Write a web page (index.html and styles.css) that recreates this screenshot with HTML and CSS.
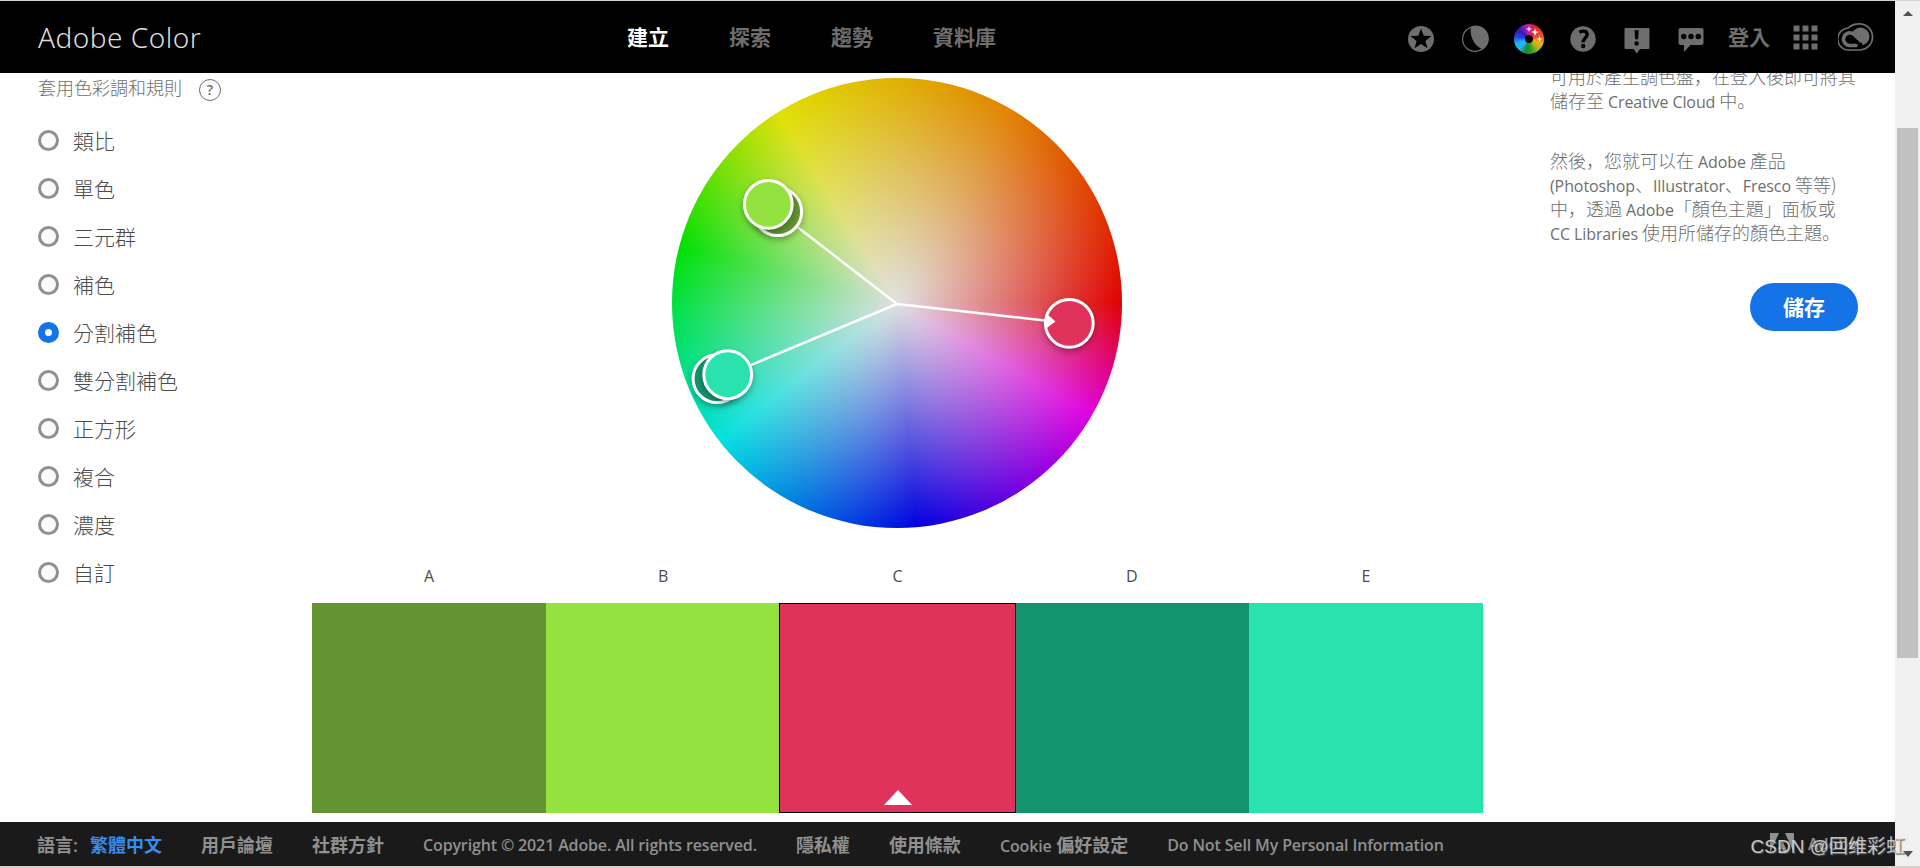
FILE: index.html
```html
<!DOCTYPE html>
<html lang="zh-Hant">
  <head>
    <meta charset="utf-8">
    <title>Adobe Color</title>
    <link rel="stylesheet" href="styles.css">
  </head>

<body>
  <div class="page">
  <header class="header">
    <div class="brand"><span class="lat">Adobe Color</span></div>
    <nav class="nav">
      <a class="active">建立</a>
      <a>探索</a>
      <a>趨勢</a>
      <a>資料庫</a>
    </nav>
    <div class="tools">
      <svg class="icon" viewBox="0 0 30 32">
        <circle cx="15" cy="16" r="13"/>
        <path fill="#000" d="M15 5.5l2.700 7.200 7.800.4-6.100 4.800 2.100 7.400-6.500-4.300-6.500 4.300 2.100-7.400-6.100-4.800 7.800-.4z"/>
      </svg>
      <svg class="icon" viewBox="0 0 30 32">
        <circle cx="15" cy="16" r="12.4" fill="none" stroke="#6e6e6e" stroke-width="1.2"/>
        <path d="M10.700 3.700A13 13 0 0 1 23.300 26.300C14.500 23.500 9.500 14 10.700 3.700z"/>
      </svg>
      <div class="mini-wheel">
        <svg viewBox="0 0 30 30">
          <circle cx="15" cy="15" r="4" fill="#000"/>
          <path fill="#fff" d="M15 2l.7 2.300 2.300.7-2.300.7-.7 2.300-.7-2.300-2.300-.7 2.300-.7zM21 4l1 3 3 1-3 1-1 3-1-3-3-1 3-1zM25.500 12l.7 2.300 2.300.7-2.300.7-.7 2.300-.7-2.300-2.300-.7 2.300-.7z"/>
        </svg>
      </div>
      <svg class="icon" viewBox="0 0 30 32">
        <circle cx="15" cy="16" r="12.700"/>
        <path fill="none" stroke="#000" stroke-width="3.400" d="M11.400 9.300c4.500-2.500 8-.8 7.700 2.500-.2 3-4.100 3.500-3.900 7.600"/>
        <circle cx="15.200" cy="23" r="2.200" fill="#000"/>
      </svg>
      <svg class="icon" viewBox="0 0 30 32">
        <path d="M3.500 5h23a1 1 0 0 1 1 1v19a1 1 0 0 1-1 1H18l-3.200 4.500L11.600 26H3.500a1 1 0 0 1-1-1V6a1 1 0 0 1 1-1z"/>
        <path fill="#000" d="M12.500 7.300h4.200l-.6 9h-3z"/>
        <circle cx="14.600" cy="20.500" r="2.200" fill="#000"/>
      </svg>
      <svg class="icon" viewBox="0 0 30 32">
        <path d="M4.500 5h21a2 2 0 0 1 2 2v13a2 2 0 0 1-2 2H14.500l-6.500 7v-7H4.500a2 2 0 0 1-2-2V7a2 2 0 0 1 2-2z"/>
        <g fill="#000"><circle cx="7.700" cy="13.500" r="2.700"/><circle cx="15" cy="13.500" r="2.700"/><circle cx="22.300" cy="13.500" r="2.700"/></g>
      </svg>
      <a class="login">登入</a>
      <svg class="apps" viewBox="0 0 25 25">
        <path d="M.5.500h6v6h-6zM9.500.500h6v6h-6zM18.500.500h6v6h-6zM.5 9.500h6v6h-6zM9.500 9.500h6v6h-6zM18.500 9.500h6v6h-6zM.5 18.500h6v6h-6zM9.500 18.500h6v6h-6zM18.500 18.500h6v6h-6z"/>
      </svg>
      <svg class="cc" viewBox="0 0 36 28">
        <path fill="none" stroke="#6e6e6e" stroke-width="1.700" d="M10 5C12.500 2.500 17.500.9 21.500.9A13 13 0 0 1 21.500 27H11.500A11 11 0 0 1 10 5z"/>
        <circle cx="22.500" cy="13.500" r="9"/>
        <path fill="none" stroke="#000" stroke-width="6.500" d="M10 17q2-5 5.500-1.500l4 3.500q2 1.500 4.500 1"/>
        <path fill="none" stroke="#6e6e6e" stroke-width="3.600" stroke-linecap="round" d="M18 22.500H11.500A6.300 6.300 0 1 1 16 11.500L23 18"/>
      </svg>
    </div>
  </header>

  <main class="main">
    <section class="rules">
      <div class="rules-title">套用色彩調和規則
        <span class="help">?</span>
      </div>
      <ul class="rule-list">
        <li><i></i>類比</li>
        <li><i></i>單色</li>
        <li><i></i>三元群</li>
        <li><i></i>補色</li>
        <li class="checked"><i></i>分割補色</li>
        <li><i></i>雙分割補色</li>
        <li><i></i>正方形</li>
        <li><i></i>複合</li>
        <li><i></i>濃度</li>
        <li><i></i>自訂</li>
      </ul>
    </section>

    <section class="stage">
      <div class="wheel">
        <svg class="markers" viewBox="0 0 450 450">
          <path class="arm" d="M225 226L105.700 133.700M225 226L55.700 296.700M225 226L397.300 245.300"/>
          <circle cx="105.700" cy="133.700" r="23.900" fill="#649431"/>
          <circle cx="96.300" cy="126.300" r="23.900" fill="#93e240"/>
          <circle cx="45" cy="300.700" r="23.900" fill="#14946e"/>
          <circle cx="55.700" cy="296.700" r="23.900" fill="#29e2ae"/>
          <circle cx="397.300" cy="245.300" r="23.900" fill="#e0335b"/>
          <path fill="#fff" d="M375 236l8.500 7.500-9.500 7z"/>
        </svg>
      </div>
      <div class="labels">
        <span>A</span><span>B</span><span>C</span><span>D</span><span>E</span>
      </div>
      <div class="swatches">
        <div class="swatch-a"></div>
        <div class="swatch-b"></div>
        <div class="swatch-c"></div>
        <div class="swatch-d"></div>
        <div class="swatch-e"></div>
      </div>
    </section>

    <section class="info" lang="zh">
      <p>可用於產生調色盤，在登入後即可將其<br>儲存至 <span class="lat">Creative Cloud</span> 中。</p>
      <p>然後，您就可以在 <span class="lat">Adobe</span> 產品<br><span class="lat">(Photoshop</span>、<span class="lat">Illustrator</span>、<span class="lat">Fresco</span> 等等)<br>中，透過 <span class="lat">Adobe</span>「顏色主題」面板或<br><span class="lat">CC Libraries</span> 使用所儲存的顏色主題。</p>
      <button class="save">儲存</button>
    </section>
  </main>

  <footer class="footer">
    <span class="lang">語言:</span>
    <a class="current">繁體中文</a>
    <a>用戶論壇</a>
    <a>社群方針</a>
    <a class="copy">Copyright © 2021 Adobe. All rights reserved.</a>
    <a>隱私權</a>
    <a>使用條款</a>
    <a><span class="cookie">Cookie</span> 偏好設定</a>
    <a class="sell">Do Not Sell My Personal Information</a>
    <div class="adobe">
      <svg viewBox="0 0 24 20"><path d="M0 0h9L0 20zM15 0h9v20zM12 7l6 13h-4l-2-4H8z"/></svg>
      <span>Adobe</span>
    </div>
  </footer>
  </div>

  <div class="scrollbar">
    <div class="arrow-up"></div>
    <div class="thumb"></div>
    <div class="arrow-down"></div>
  </div>
  <div class="watermark">CSDN @<span>回维彩虹</span></div>
</body>
</html>
```
FILE: styles.css
```css
* {
  box-sizing: border-box;
}

body {
  margin: 0;
  width: 1920px;
  height: 868px;
  padding-top: 1px;
  display: flex;
  overflow: hidden;
  position: relative;
  background: #d5d3d2;
  font-family: "Open Sans", "Noto Sans CJK TC", sans-serif;
  color: #4b4b4b;
}

.page {
  width: 1895px;
  height: 865px;
  display: flex;
  flex-direction: column;
  background: #fff;
}

.header {
  height: 72px;
  flex-shrink: 0;
  background: #000;
  display: flex;
  align-items: center;
  padding: 0 21px 0 38px;
  z-index: 1;
}

.brand {
  width: 589px;
  font-size: 28px;
  line-height: 40px;
  font-weight: 300;
  letter-spacing: 0.5px;
  color: #dcdcdc;
}

.brand .lat {
  font-family: "Noto Sans", "Open Sans", sans-serif;
}

.nav {
  display: flex;
  gap: 60px;
  font-size: 21px;
  line-height: 30px;
  font-weight: 700;
  color: #6e6e6e;
}

.nav .active {
  color: #fff;
}

.tools {
  margin-left: auto;
  display: flex;
  align-items: center;
  fill: #6e6e6e;
}

.icon {
  width: 30px;
  height: 32px;
  margin-right: 24px;
  margin-top: 3px;
}

.mini-wheel {
  width: 30px;
  height: 30px;
  margin-right: 24px;
  margin-top: 3px;
  border-radius: 50%;
  background: conic-gradient(#c81e96, #f01e32 30deg, #f05a28 80deg, #f0b414 110deg, #a0b41e 140deg, #28a028 170deg, #148c28 195deg, #28b4f0 225deg, #1eb4ff 250deg, #1e46e6 280deg, #3c14b4 315deg, #8c1ec8 340deg, #c81e96);
}

.mini-wheel svg {
  display: block;
}

.login {
  margin-left: -2px;
  font-size: 21px;
  line-height: 30px;
  font-weight: 700;
  color: #6e6e6e;
}

.apps {
  width: 25px;
  height: 25px;
  margin: 1px 20px 0 23px;
}

.cc {
  width: 36px;
  height: 28px;
}

.main {
  height: 749px;
  flex-shrink: 0;
  display: flex;
}

.rules {
  width: 312px;
  padding-left: 38px;
}

.rules-title {
  height: 32px;
  display: flex;
  font-size: 18px;
  line-height: 30px;
  font-weight: 300;
  color: #6e6e6e;
}

.help {
  width: 22px;
  height: 22px;
  margin: 6px 0 0 17px;
  border: 1.5px solid #6e6e6e;
  border-radius: 50%;
  text-align: center;
  font-size: 14px;
  line-height: 19px;
  font-weight: 600;
}

.rule-list {
  margin: 12px 0 0;
  padding: 0;
  list-style: none;
}

.rule-list li {
  height: 48px;
  display: flex;
  align-items: center;
  padding-bottom: 2px;
  font-size: 21px;
  font-weight: 300;
}

.rule-list i {
  width: 21px;
  height: 21px;
  margin: 1px 14px 0 0;
  border: 3px solid #909090;
  border-radius: 50%;
  background: #fafafa;
}

.rule-list .checked i {
  border: 7px solid #1473e6;
}

.stage {
  width: 1171px;
}

.wheel {
  width: 450px;
  height: 450px;
  margin: 5px 0 0 360px;
  border-radius: 50%;
  background:
    radial-gradient(closest-side, rgb(224, 224, 224), rgba(224, 224, 224, 0)),
    conic-gradient(from 90deg, #e00000, #e000e0 30deg, #0000e0 85deg, #00e0e0 142deg, #00e000 195deg, #e0e000 238deg, #e08300 300deg, #e00000);
}

.markers {
  display: block;
  overflow: visible;
}

.markers circle {
  stroke: #fff;
  stroke-width: 3;
  filter: drop-shadow(0 3px 3px rgba(0, 0, 0, 0.3));
}

.arm {
  fill: none;
  stroke: #fff;
  stroke-width: 2.5;
}

.labels {
  display: grid;
  grid-template-columns: repeat(5, 1fr);
  margin-top: 36px;
  height: 39px;
  font-size: 16px;
  line-height: 24px;
  text-align: center;
}

.swatches {
  display: grid;
  grid-template-columns: 234px 233px 237px 233px 234px;
  height: 210px;
}

.swatch-a {
  background: #649431;
}

.swatch-b {
  background: #93e240;
}

.swatch-c {
  display: flex;
  align-items: flex-end;
  justify-content: center;
  padding-bottom: 7px;
  border: 1px solid #000;
  background: #e0335b;
}

.swatch-c::after {
  content: "";
  border: 14px solid transparent;
  border-top: 0;
  border-bottom: 15px solid #fff;
}

.swatch-d {
  background: #14946e;
}

.swatch-e {
  background: #29e2ae;
}

.info {
  width: 412px;
  padding: 0 37px 0 67px;
  display: flex;
  flex-direction: column;
  font-family: "Noto Sans CJK SC", sans-serif;
  font-size: 18px;
  line-height: 24px;
  font-weight: 300;
  white-space: nowrap;
  color: #6e6e6e;
}

.info p {
  margin: -9px 0 36px;
}

.info p + p {
  margin: 0 0 39px;
}

.info .lat {
  font-family: "Open Sans", sans-serif;
  font-size: 16px;
  line-height: 1;
  font-weight: 400;
  letter-spacing: -0.1px;
}

.save {
  width: 108px;
  height: 48px;
  padding-bottom: 3px;
  align-self: flex-end;
  border: 0;
  border-radius: 24px;
  background: #1473e6;
  color: #fff;
  font: 700 21px "Noto Sans CJK TC", sans-serif;
}

.footer {
  height: 44px;
  flex-shrink: 0;
  display: flex;
  align-items: center;
  padding: 0 37px;
  background: #1a1a1a;
  color: #909090;
  font-size: 16px;
  font-weight: 600;
  white-space: nowrap;
}

.footer a {
  margin-right: 39px;
  font-size: 18px;
}

.footer .lang {
  width: 53px;
  font-size: 18px;
}

.footer .current {
  color: #378ef0;
}

.footer .copy,
.footer .cookie,
.footer .sell {
  font-size: 16px;
  letter-spacing: -0.14px;
}

.footer .copy,
.footer .sell {
  padding-top: 2px;
}

.adobe {
  display: flex;
  margin-left: auto;
  gap: 14px;
  width: 88px;
}

.adobe svg {
  width: 24px;
  height: 20px;
  fill: #909090;
}

.scrollbar {
  width: 25px;
  height: 865px;
  display: flex;
  flex-direction: column;
  align-items: center;
  background: #f0f0f0;
}

.arrow-up {
  margin-top: 10px;
  border: 5px solid transparent;
  border-top: 0;
  border-bottom: 5px solid #505050;
}

.thumb {
  width: 21px;
  height: 530px;
  margin-top: 112px;
  background: #c1c1c1;
}

.arrow-down {
  margin-top: 193px;
  border: 5px solid transparent;
  border-bottom: 0;
  border-top: 6px solid #505050;
}

/* overlaid on the footer and the scrollbar */
.watermark {
  position: absolute;
  right: 15px;
  bottom: 7px;
  z-index: 2;
  font: 19px/28px "Liberation Sans", "Noto Sans CJK SC", sans-serif;
  color: rgba(225, 225, 225, 0.85);
  text-shadow: 1px 1px 1px #555;
}
```
